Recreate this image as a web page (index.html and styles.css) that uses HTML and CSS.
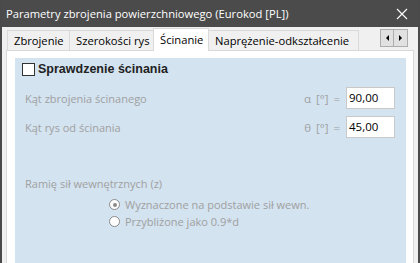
FILE: index.html
```html
<!DOCTYPE html>
<html lang="pl">
<head>
  <meta charset="UTF-8">
  <title>Parametry zbrojenia powierzchniowego</title>
  <link rel="stylesheet" href="styles.css">
</head>
<body>

  <div class="window">
    <!-- Pasek tytułu -->
    <div class="titlebar">
      <span class="title">Parametry zbrojenia powierzchniowego (Eurokod [PL])</span>
      <svg class="close" width="12" height="12" viewBox="0 0 12 12">
        <path d="M1 1 L11 11 M11 1 L1 11" stroke="#fff" stroke-width="1.1"/>
      </svg>
    </div>

    <div class="body">
      <!-- Zakładki -->
      <div class="tabs">
        <div class="tab t1">Zbrojenie</div>
        <div class="tab t2">Szerokości rys</div>
        <div class="tab t3 active">Ścinanie</div>
        <div class="tab t4">Naprężenie-odkształcenie</div>
        <div class="scroller">
          <div class="arrow"><span class="tri left"></span></div>
          <div class="arrow"><span class="tri right"></span></div>
        </div>
      </div>

      <div class="pane">
        <div class="panel">
          <label class="check">
            <span class="box"></span>
            Sprawdzenie ścinania
          </label>

          <div class="row">
            <span class="lbl">Kąt zbrojenia ścinanego</span>
            <span class="sym">α [°] =</span>
            <span class="field">90,00</span>
          </div>
          <div class="row">
            <span class="lbl">Kąt rys od ścinania</span>
            <span class="sym">θ [°] =</span>
            <span class="field">45,00</span>
          </div>

          <div class="group">Ramię sił wewnętrznych (z)</div>
          <div class="radios">
            <div class="radio"><span class="dot on"></span>Wyznaczone na podstawie sił wewn.</div>
            <div class="radio"><span class="dot"></span>Przybliżone jako 0.9*d</div>
          </div>
        </div>
      </div>
    </div>
  </div>

</body>
</html>
```

FILE: styles.css
```css
body {
  margin: 0;
  font-family: 'Open Sans', 'Noto Sans', sans-serif;
  font-size: 11px;
  background: #f0f0f0;
}

.window {
  width: 420px;
  height: 263px;
  box-sizing: border-box;
  border-left: 2px solid #4a4a4a;
  border-right: 2px solid #4a4a4a;
  display: flex;
  flex-direction: column;
  overflow: hidden;
}

.titlebar {
  height: 27px;
  background: #4b4b4b;
  color: #fff;
  display: flex;
  align-items: center;
  justify-content: space-between;
  padding: 0 10px 0 4px;
  flex-shrink: 0;
}

.title {
  font-size: 11.2px;
}

.body {
  flex: 1;
  padding: 2px 4px 0 4px;
  display: flex;
  flex-direction: column;
}

.tabs {
  display: flex;
  height: 21px;
  padding-left: 1px;
  align-items: flex-end;
}

.tab {
  height: 20px;
  box-sizing: border-box;
  padding: 0 0 0 6px;
  background: #f0f0f0;
  border: 1px solid #d9d9d9;
  border-bottom: none;
  margin-right: -1px;
  line-height: 19px;
  font-size: 11.2px;
  color: #000;
  white-space: nowrap;
}

.t1 { width: 63px; }
.t2 { width: 85px; }
.t3 { width: 56px; }
.t4 { width: 151px; }

.tab.active {
  height: 23px;
  background: #fff;
  position: relative;
  z-index: 1;
  margin-bottom: -1px;
  line-height: 21px;
}

.scroller {
  margin-left: auto;
  margin-right: 6px;
  align-self: flex-start;
  display: flex;
}

.arrow {
  width: 14px;
  height: 18px;
  box-sizing: border-box;
  border: 1px solid #adadad;
  background: #e1e1e1;
  display: flex;
  align-items: center;
  justify-content: center;
}

.arrow + .arrow {
  border-left: none;
}

.tri {
  width: 0;
  height: 0;
  border-top: 3px solid transparent;
  border-bottom: 3px solid transparent;
}

.tri.left {
  border-right: 3px solid #000;
}

.tri.right {
  border-left: 3px solid #000;
}

.pane {
  flex: 1;
  background: #fff;
  border: 1px solid #d9d9d9;
  border-bottom: none;
  padding: 7px 7px 0 8px;
  display: flex;
}

.panel {
  flex: 1;
  background: #d3e3f0;
  padding: 2px 0 0 10px;
  color: #a0a0a0;
}

.check {
  display: flex;
  align-items: center;
  gap: 3px;
  margin-left: -3px;
  font-family: 'Liberation Sans', Arial, sans-serif;
  font-weight: bold;
  font-size: 12.5px;
  color: #222;
  height: 18px;
}

.box {
  width: 11px;
  height: 11px;
  border: 1px solid #333;
  background: #fff;
}

.row {
  display: flex;
  align-items: center;
  height: 22px;
}

.check + .row {
  margin-top: 9px;
}

.row + .row {
  margin-top: 7px;
}

.lbl {
  flex: 1;
}

.sym {
  margin-right: 6px;
  font-size: 11.5px;
  word-spacing: 2px;
}

.field {
  width: 49px;
  height: 22px;
  box-sizing: border-box;
  background: #fff;
  border: 1px solid #c9c9c9;
  color: #000;
  padding-left: 2px;
  line-height: 20px;
  font-size: 11.5px;
  margin-right: 11px;
}

.group {
  margin-top: 38px;
}

.radios {
  margin-top: 5px;
  padding-left: 84px;
}

.radio {
  display: flex;
  align-items: center;
  gap: 5px;
  height: 17px;
}

.dot {
  width: 11px;
  height: 11px;
  box-sizing: border-box;
  border: 1px solid #8a8a8a;
  border-radius: 50%;
  background: #fff;
  position: relative;
}

.dot.on::after {
  content: "";
  position: absolute;
  left: 2.5px;
  top: 2.5px;
  width: 4px;
  height: 4px;
  border-radius: 50%;
  background: #8a8a8a;
}
```
